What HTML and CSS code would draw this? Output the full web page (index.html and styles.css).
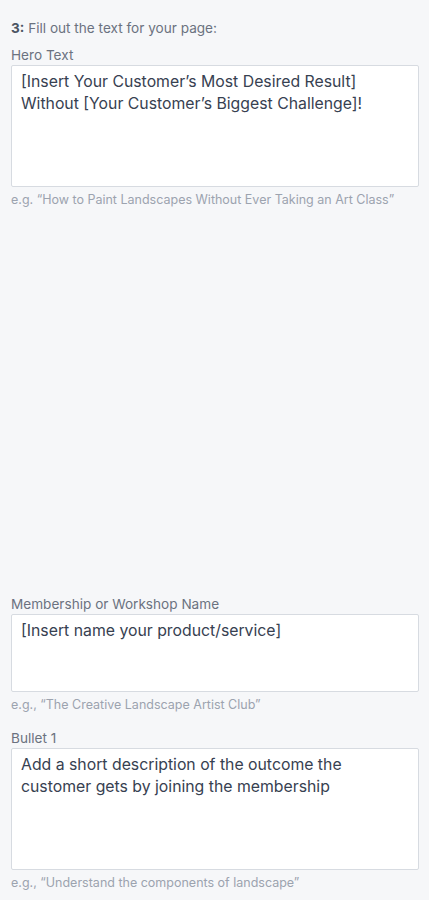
FILE: index.html
```html
<!DOCTYPE html>
<html>
<head>
<meta charset="utf-8">
<link rel="stylesheet" href="styles.css">
</head>
<body>
<div class="page">
  <div class="step"><b>3:</b> Fill out the text for your page:</div>
  <div class="field">
    <label class="label">Hero Text</label>
    <div class="box tall">[Insert Your Customer’s Most Desired Result] Without [Your Customer’s Biggest Challenge]!</div>
    <div class="help">e.g. “How to Paint Landscapes Without Ever Taking an Art Class”</div>
  </div>
  <div class="spacer"></div>
  <div class="field">
    <label class="label">Membership or Workshop Name</label>
    <div class="box short">[Insert name your product/service]</div>
    <div class="help">e.g., “The Creative Landscape Artist Club”</div>
  </div>
  <div class="field">
    <label class="label">Bullet 1</label>
    <div class="box tall">Add a short description of the outcome the customer gets by joining the membership</div>
    <div class="help">e.g., “Understand the components of landscape”</div>
  </div>
</div>
</body>
</html>
```
FILE: styles.css
```css
html, body {
  margin: 0;
  padding: 0;
  background: #f6f7f9;
}
.page {
  padding: 18px 10px 0 11px;
  font-family: Inter, "Noto Sans", sans-serif;
  display: flex;
  flex-direction: column;
  gap: 15px;
}
.step {
  font-size: 13.6px;
  line-height: 20px;
  color: #6b7280;
  margin-bottom: -8px;
}
.step b {
  color: #4b5563;
  font-weight: 700;
}
.field {
  display: flex;
  flex-direction: column;
}
.label {
  display: block;
  font-size: 13.6px;
  line-height: 20px;
  color: #6b7280;
}
.box {
  box-sizing: border-box;
  background: #fff;
  border: 1px solid #d7dbe1;
  border-radius: 2px;
  padding: 5px 10px 0 9px;
  font-size: 15.8px;
  line-height: 22px;
  color: #374151;
}
.tall { height: 122px; }
.short { height: 78px; }
.help {
  margin-top: 5px;
  font-size: 12.5px;
  line-height: 16px;
  color: #9ca3af;
}
.spacer {
  height: 356px;
}
```
